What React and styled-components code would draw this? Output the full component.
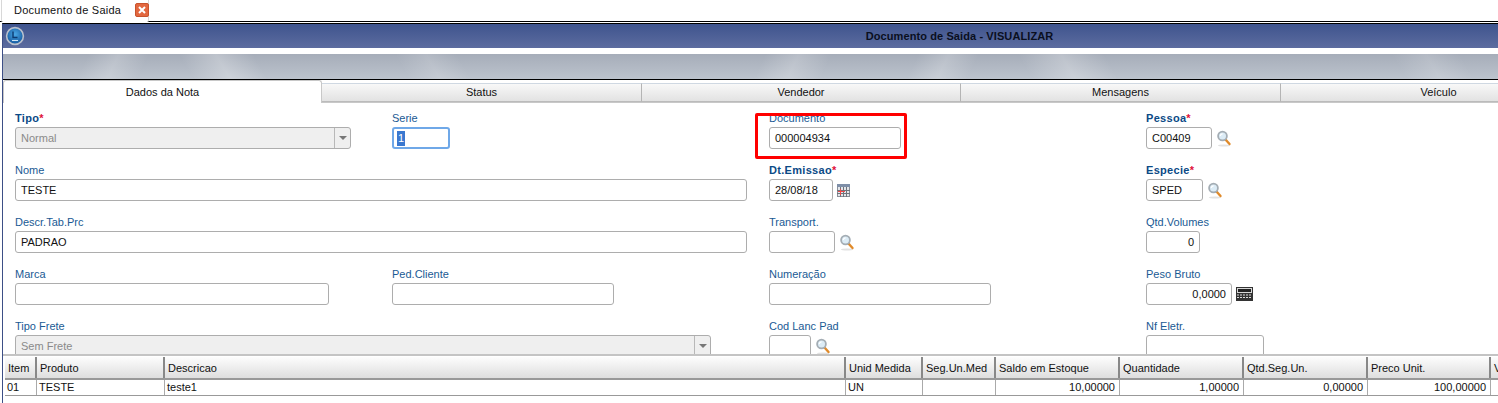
import React from "react";
import styled, { createGlobalStyle } from "styled-components";

const GlobalStyle = createGlobalStyle`
  html, body {
    margin: 0;
    padding: 0;
    background: #fff;
    overflow: hidden;
  }
  * {
    box-sizing: border-box;
  }
`;

const Page = styled.div`
  width: 1498px;
  height: 403px;
  overflow: hidden;
  display: flex;
  flex-direction: column;
  font-family: "Liberation Sans", Arial, sans-serif;
  font-size: 11px;
  color: #111;
`;
const TabStrip = styled.div`
  height: 22px;
  flex: none;
  display: flex;
  padding-left: 1px;
  border-bottom: 1px solid #000;
`;
const OuterTab = styled.div`
  width: 148px;
  height: 22px;
  display: flex;
  align-items: center;
  padding: 0 0 2px 12px;
  gap: 14px;
  font-size: 11px;
  letter-spacing: 0.25px;
  white-space: nowrap;
  background: #fff;
  border: 1px solid #d8d8d8;
  border-top: none;
  border-bottom: none;
  border-radius: 0 0 2px 2px;
`;
const CloseBox = styled.span`
  width: 14px;
  height: 14px;
  flex: none;
  display: flex;
  align-items: center;
  justify-content: center;
  background: #e2673f;
  border: 1px solid #c8532d;
  border-radius: 2px;
`;
const Frame = styled.div`
  flex: 1;
  min-height: 0;
  display: flex;
  flex-direction: column;
  margin-top: 1px;
  margin-left: 2px;
  border-top: 1px solid #000;
  border-left: 1px solid #3d4f86;
`;
const TitleBar = styled.div`
  height: 24px;
  flex: none;
  display: flex;
  align-items: center;
  padding-left: 2px;
  background: linear-gradient(#3f548e, #5c6c9f);
`;
const TitleText = styled.div`
  flex: 1;
  text-align: center;
  font-size: 11px;
  font-weight: bold;
  letter-spacing: 0.1px;
  color: #0a0f20;
  padding-left: 396px;
  padding-bottom: 1px;
`;
const Gap = styled.div`
  height: 6px;
  flex: none;
  background: #fff;
`;
const streak = (x, w, angle, alpha) =>
  `linear-gradient(${angle}deg, transparent 20%, rgba(255, 255, 255, ${alpha}) 50%, transparent 80%) ${x}px 0 / ${w}px 100% no-repeat`;
const Band = styled.div`
  height: 26px;
  flex: none;
  border-bottom: 1px solid #000;
  background:
    ${streak(65, 90, 115, 0.2)},
    ${streak(165, 110, 60, 0.26)},
    ${streak(385, 90, 60, 0.15)},
    ${streak(740, 100, 115, 0.2)},
    ${streak(895, 90, 115, 0.2)},
    ${streak(1000, 130, 60, 0.24)},
    ${streak(1380, 100, 60, 0.15)},
    linear-gradient(#a6adb9, #bcc3cd);
`;
const TabBar = styled.div`
  height: 23px;
  flex: none;
  display: flex;
  align-items: flex-end;
  border-bottom: 1px solid #c8c8c8;
`;
const SubTab = styled.div`
  width: ${(p) => p.$w}px;
  flex: none;
  display: flex;
  align-items: center;
  justify-content: center;
  padding-bottom: 1px;
  font-size: 11px;
  ${(p) =>
    p.$active
      ? `
    height: 23px;
    margin-bottom: -1px;
    background: #fff;
    border: 1px solid #c8c8c8;
    border-bottom: none;
    border-radius: 3px 3px 0 0;
  `
      : `
    height: 19px;
    background: linear-gradient(#f8f8f8, #e2e2e2);
    border-top: 1px solid #cfd8e2;
    border-right: 1px solid #b4b4b4;
    border-bottom: 1px solid #bbb;
  `}
`;
const Form = styled.div`
  height: 251px;
  flex: none;
  overflow: hidden;
  padding: 8px 0 0 12px;
  display: grid;
  grid-template-columns: repeat(4, 377px);
  grid-auto-rows: 52px;
`;
const Field = styled.div`
  position: relative;
  grid-column: span ${(p) => p.$span || 1};
`;
const Label = styled.div`
  height: 16px;
  line-height: 15px;
  white-space: nowrap;
  color: ${(p) => (p.$req ? "#0b4a86" : "#1a5a94")};
  font-weight: ${(p) => (p.$req ? "bold" : "normal")};
  font-size: 11px;
  letter-spacing: ${(p) => (p.$req ? "0.3px" : "0")};
  em {
    font-style: normal;
    color: #e0103a;
  }
`;
const InputRow = styled.div`
  display: flex;
  align-items: center;
  gap: 4px;
`;
const Input = styled.div`
  width: ${(p) => p.$w}px;
  height: 22px;
  flex: none;
  display: flex;
  align-items: center;
  padding: 0 5px;
  justify-content: ${(p) => (p.$right ? "flex-end" : "flex-start")};
  background: ${(p) => (p.$disabled ? "#efefef" : "#fff")};
  color: ${(p) => (p.$disabled ? "#8a8a8a" : "#111")};
  border: ${(p) => (p.$focus ? "2px solid #6fa8e8" : "1px solid #adadad")};
  border-radius: 3px;
  font-size: 11px;
  position: relative;
`;
const Selected = styled.span`
  background: #3a78d0;
  color: #fff;
  padding: 0 1px;
  margin-left: -2px;
  height: 15px;
  line-height: 15px;
`;
const Arrow = styled.span`
  position: absolute;
  right: 0;
  top: 0;
  bottom: 0;
  width: 16px;
  display: flex;
  align-items: center;
  justify-content: center;
  border-left: 1px solid #b8b8b8;
  &::after {
    content: "";
    border-left: 4px solid transparent;
    border-right: 4px solid transparent;
    border-top: 4px solid #777;
  }
`;
const Highlight = styled.div`
  position: absolute;
  left: -14px;
  top: 2px;
  width: 152px;
  height: 46px;
  border: 3px solid #f00;
  border-radius: 2px;
  pointer-events: none;
`;
const Grid = styled.div`
  flex: 1;
  min-height: 0;
  overflow: hidden;
  border-top: 2px solid #c4c4c4;
  padding: 1px 0 0 2px;
`;
const Row = styled.div`
  display: flex;
  width: 1600px;
  height: ${(p) => (p.$head ? 23 : 16)}px;
  border-bottom: ${(p) => (p.$head ? 2 : 1)}px solid #999;
  ${(p) => p.$head && "background: linear-gradient(#fdfdfd, #dedede);"}
`;
const Cell = styled.div`
  width: ${(p) => p.$w}px;
  flex: none;
  display: flex;
  align-items: center;
  white-space: nowrap;
  overflow: hidden;
  font-size: 11px;
  padding: ${(p) => (p.$head ? "1px 3px 0" : "0 4px 2px 2px")};
  justify-content: ${(p) => (p.$right ? "flex-end" : "flex-start")};
  border-right: ${(p) => (p.$head ? 2 : 1)}px solid ${(p) => (p.$head ? "#888" : "#aaa")};
`;

const Lupa = () => (
  <svg width="16" height="17" viewBox="0 0 16 17">
    <ellipse cx="8" cy="15.5" rx="6" ry="1" fill="#e2e2e2" />
    <line x1="9.5" y1="9.5" x2="13.5" y2="14" stroke="#e08a2a" strokeWidth="2.4" strokeLinecap="round" />
    <circle cx="6.5" cy="6" r="4.4" fill="#dcecf6" stroke="#a4adb4" strokeWidth="1.8" />
    <path d="M4.2 6a2.6 2.6 0 0 1 2.4-2.2" fill="none" stroke="#fff" strokeWidth="1.2" />
  </svg>
);

const DateIcon = () => (
  <svg width="13" height="13" viewBox="0 0 13 13">
    <rect x="0.5" y="0.5" width="12" height="12" fill="#e4e6ea" stroke="#8a8f98" />
    <rect x="0" y="0" width="13" height="3" fill="#7f8fa8" />
    <path d="M3.5 3v10M6.5 3v10M9.5 3v10M0 6.5h13M0 9.5h13" stroke="#6f747c" strokeWidth="1" />
    <path d="M3.5 5v6M1 7.5h7" stroke="#f04848" strokeWidth="1" />
  </svg>
);

const CalcIcon = () => (
  <svg width="17" height="14" viewBox="0 0 17 14">
    <rect x="0.5" y="0.5" width="16" height="13" fill="#d8d8d8" stroke="#333" />
    <rect x="2" y="2" width="13" height="3" fill="#222" />
    <rect x="1" y="6" width="15" height="7" fill="#333" />
    <path d="M1 8h15M1 10.5h15" stroke="#ddd" strokeWidth="1" strokeDasharray="2 1" />
  </svg>
);

const Logo = () => (
  <svg width="20" height="20" viewBox="0 0 20 20">
    <defs>
      <radialGradient id="lg" cx="0.5" cy="0.4" r="0.65">
        <stop offset="0" stopColor="#4aa8e6" />
        <stop offset="1" stopColor="#0f4f96" />
      </radialGradient>
    </defs>
    <circle cx="10" cy="10" r="8.4" fill="url(#lg)" stroke="#b9c0cc" strokeWidth="1.6" />
    <path d="M8 5.5v6h4.5" fill="none" stroke="#0d3a70" strokeWidth="1.4" />
    <path d="M7 14.5h6" stroke="#cfe6f6" strokeWidth="1" />
  </svg>
);

const subTabs = [
  { name: "Dados da Nota", w: 319, active: true },
  { name: "Status", w: 320 },
  { name: "Vendedor", w: 319 },
  { name: "Mensagens", w: 320 },
  { name: "Veículo", w: 316 },
];

const columns = [
  { name: "Item", w: 32 },
  { name: "Produto", w: 128 },
  { name: "Descricao", w: 681 },
  { name: "Unid Medida", w: 77 },
  { name: "Seg.Un.Med", w: 73 },
  { name: "Saldo em Estoque", w: 124 },
  { name: "Quantidade", w: 124 },
  { name: "Qtd.Seg.Un.", w: 124 },
  { name: "Preco Unit.", w: 123 },
  { name: "Vlr", w: 80 },
];

const rowData = [
  { v: "01" },
  { v: "TESTE" },
  { v: "teste1" },
  { v: "UN" },
  { v: "" },
  { v: "10,00000", right: true },
  { v: "1,00000", right: true },
  { v: "0,00000", right: true },
  { v: "100,00000", right: true },
  { v: "" },
];

const App = () => {
  return (
    <Page>
      <GlobalStyle />
      <TabStrip>
        <OuterTab>
          Documento de Saida
          <CloseBox>
            <svg width="8" height="8" viewBox="0 0 8 8">
              <path d="M1 1l6 6M7 1l-6 6" stroke="#fff" strokeWidth="2" />
            </svg>
          </CloseBox>
        </OuterTab>
      </TabStrip>
      <Frame>
        <TitleBar>
          <Logo />
          <TitleText>Documento de Saida - VISUALIZAR</TitleText>
        </TitleBar>
        <Gap />
        <Band />
        <TabBar>
          {subTabs.map((t) => (
            <SubTab key={t.name} $w={t.w} $active={t.active}>
              {t.name}
            </SubTab>
          ))}
        </TabBar>
        <Form>
          <Field>
            <Label $req>
              Tipo<em>*</em>
            </Label>
            <Input $w={336} $disabled>
              Normal
              <Arrow />
            </Input>
          </Field>
          <Field>
            <Label>Serie</Label>
            <Input $w={58} $focus>
              <Selected>1</Selected>
            </Input>
          </Field>
          <Field>
            <Label>Documento</Label>
            <Input $w={132}>000004934</Input>
            <Highlight />
          </Field>
          <Field>
            <Label $req>
              Pessoa<em>*</em>
            </Label>
            <InputRow>
              <Input $w={66}>C00409</Input>
              <Lupa />
            </InputRow>
          </Field>

          <Field $span={2}>
            <Label>Nome</Label>
            <Input $w={732}>TESTE</Input>
          </Field>
          <Field>
            <Label $req>
              Dt.Emissao<em>*</em>
            </Label>
            <InputRow>
              <Input $w={64}>28/08/18</Input>
              <DateIcon />
            </InputRow>
          </Field>
          <Field>
            <Label $req>
              Especie<em>*</em>
            </Label>
            <InputRow>
              <Input $w={57}>SPED</Input>
              <Lupa />
            </InputRow>
          </Field>

          <Field $span={2}>
            <Label>Descr.Tab.Prc</Label>
            <Input $w={732}>PADRAO</Input>
          </Field>
          <Field>
            <Label>Transport.</Label>
            <InputRow>
              <Input $w={66} />
              <Lupa />
            </InputRow>
          </Field>
          <Field>
            <Label>Qtd.Volumes</Label>
            <Input $w={54} $right>
              0
            </Input>
          </Field>

          <Field>
            <Label>Marca</Label>
            <Input $w={314} />
          </Field>
          <Field>
            <Label>Ped.Cliente</Label>
            <Input $w={222} />
          </Field>
          <Field>
            <Label>Numeração</Label>
            <Input $w={222} />
          </Field>
          <Field>
            <Label>Peso Bruto</Label>
            <InputRow>
              <Input $w={86} $right>
                0,0000
              </Input>
              <CalcIcon />
            </InputRow>
          </Field>

          <Field $span={2}>
            <Label>Tipo Frete</Label>
            <Input $w={696} $disabled>
              Sem Frete
              <Arrow />
            </Input>
          </Field>
          <Field>
            <Label>Cod Lanc Pad</Label>
            <InputRow>
              <Input $w={42} />
              <Lupa />
            </InputRow>
          </Field>
          <Field>
            <Label>Nf Eletr.</Label>
            <Input $w={118} />
          </Field>
        </Form>
        <Grid>
          <Row $head>
            {columns.map((c) => (
              <Cell key={c.name} $w={c.w} $head>
                {c.name}
              </Cell>
            ))}
          </Row>
          <Row>
            {rowData.map((d, i) => (
              <Cell key={i} $w={columns[i].w} $right={d.right}>
                {d.v}
              </Cell>
            ))}
          </Row>
        </Grid>
      </Frame>
    </Page>
  );
};

export default App;
